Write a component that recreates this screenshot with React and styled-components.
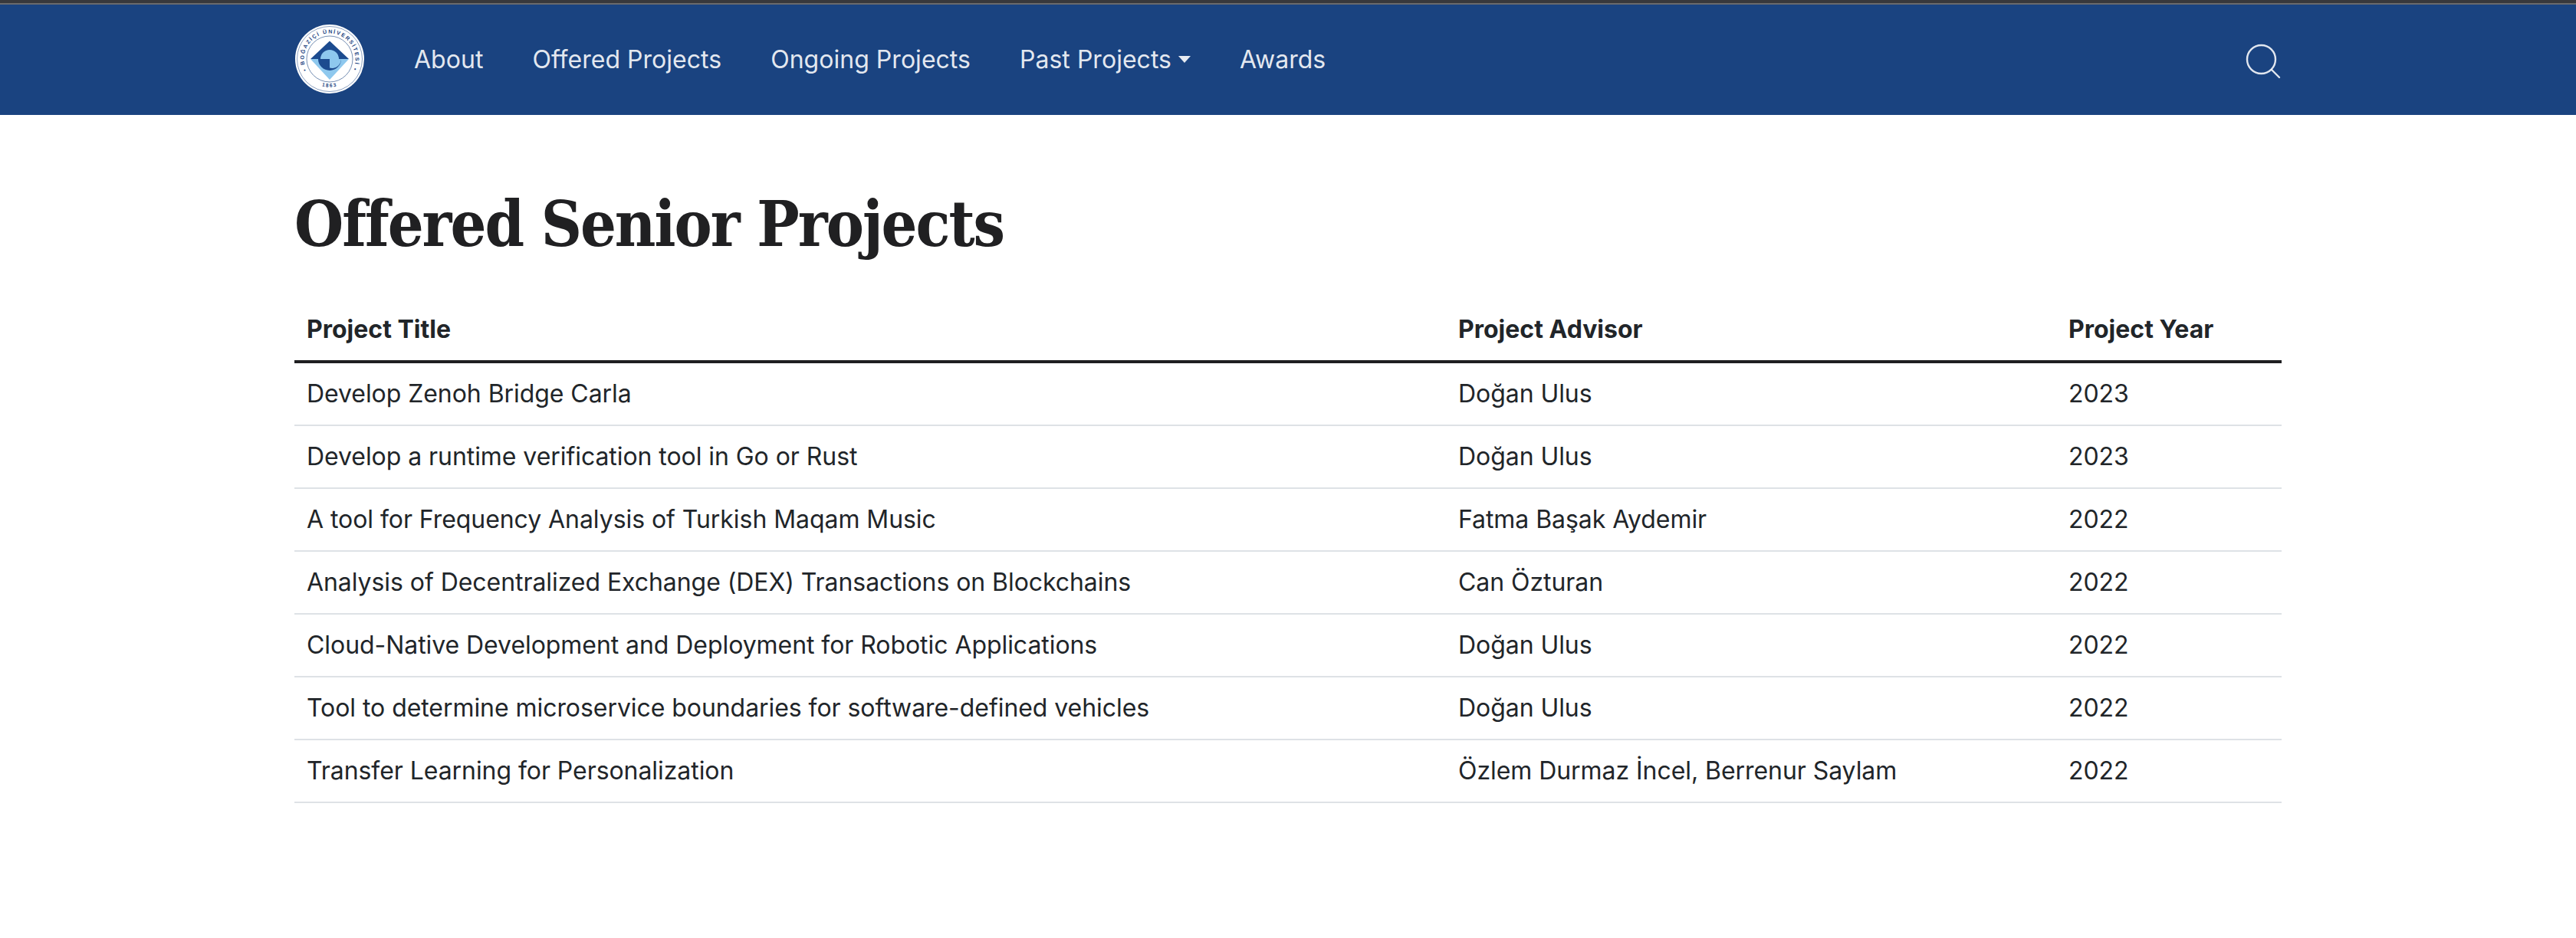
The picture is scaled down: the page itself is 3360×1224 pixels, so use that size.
import styled, { createGlobalStyle } from 'styled-components'

const GlobalStyle = createGlobalStyle`
  html, body {
    margin: 0;
    padding: 0;
    background: #fff;
    color: #212529;
    font-family: Inter, "Liberation Sans", sans-serif;
    font-size: 32px;
    line-height: 48px;
  }
`

const WindowEdge = styled.div`
  height: 4px;
  background: #38383b;
  border-bottom: 2px solid #6a6a6c;
`

const Navbar = styled.nav`
  height: 144px;
  background: #1a4380;
`

const NavInner = styled.div`
  width: 2592px;
  height: 100%;
  margin: 0 auto;
  display: flex;
  align-items: center;
`

const LogoSvg = styled.svg`
  width: 92px;
  height: 92px;
  margin-right: 32px;
  margin-bottom: 2px;
  flex: none;
`

const NavLink = styled.a`
  padding: 0 32px;
  color: rgba(255, 255, 255, 0.9);
  text-decoration: none;
  white-space: nowrap;
  letter-spacing: 0.03px;
  display: flex;
  align-items: center;
`

const Caret = styled.span`
  display: inline-block;
  margin-left: 9px;
  margin-top: -2px;
  border-top: 9px solid currentColor;
  border-left: 8.5px solid transparent;
  border-right: 8.5px solid transparent;
`

const SearchButton = styled.button`
  margin-left: auto;
  margin-top: 4px;
  padding: 0;
  border: 0;
  background: none;
  color: rgba(255, 255, 255, 0.87);
  display: flex;
`

const Main = styled.main`
  width: 2592px;
  margin: 0 auto;
`

const Heading = styled.h1`
  margin: 0;
  padding-top: 94px;
  padding-bottom: 50px;
  font-family: "DejaVu Serif", serif;
  font-stretch: condensed;
  font-variant-ligatures: none;
  font-weight: 700;
  font-size: 82px;
  line-height: 96px;
  letter-spacing: -2px;
  color: #202022;
`

const Table = styled.table`
  width: 100%;
  border-collapse: collapse;
  table-layout: fixed;
`

const HeadCell = styled.th`
  padding: 16px;
  text-align: left;
  font-weight: 700;
  border-bottom: 4px solid #1f1f21;
`

const Cell = styled.td`
  padding: 16px;
  letter-spacing: -0.06px;
  border-bottom: 2px solid #dee2e6;
`

const projects = [
  ['Develop Zenoh Bridge Carla', 'Doğan Ulus', '2023'],
  ['Develop a runtime verification tool in Go or Rust', 'Doğan Ulus', '2023'],
  ['A tool for Frequency Analysis of Turkish Maqam Music', 'Fatma Başak Aydemir', '2022'],
  ['Analysis of Decentralized Exchange (DEX) Transactions on Blockchains', 'Can Özturan', '2022'],
  ['Cloud-Native Development and Deployment for Robotic Applications', 'Doğan Ulus', '2022'],
  ['Tool to determine microservice boundaries for software-defined vehicles', 'Doğan Ulus', '2022'],
  ['Transfer Learning for Personalization', 'Özlem Durmaz İncel, Berrenur Saylam', '2022'],
]

function Logo() {
  return (
    <LogoSvg viewBox="0 0 92 92">
      <defs>
        <path id="sealTop" d="M15.9 60.7 A33.5 33.5 0 1 1 76.1 60.7" />
        <path id="sealBottom" d="M26 76.8 A36.5 36.5 0 0 0 66 76.8" />
      </defs>
      <circle cx="46" cy="46" r="45" fill="#fff" />
      <circle cx="46" cy="46" r="42.5" fill="none" stroke="#1a4380" strokeWidth="0.5" />
      <circle cx="46" cy="46" r="30" fill="none" stroke="#1a4380" strokeWidth="0.6" />
      <text fontFamily="Liberation Sans, sans-serif" fontSize="7" fontWeight="700" fill="#1a4380">
        <textPath href="#sealTop" textLength="134" lengthAdjust="spacing">• BOĞAZİÇİ ÜNİVERSİTESİ •</textPath>
      </text>
      <text fontFamily="Liberation Sans, sans-serif" fontSize="6.5" fontWeight="700" fill="#1a4380" letterSpacing="1.6" textAnchor="middle">
        <textPath href="#sealBottom" startOffset="50%">1863</textPath>
      </text>
      {/* diamond, dark above and light below, with the S in the middle */}
      <path d="M46 22.5 L71 46 H21 Z" fill="#1c4b8f" />
      <path d="M21 46 H71 L46 73 Z" fill="#8ec8ee" />
      <path d="M34 46 A12 12 0 0 1 58 46 Z" fill="#8ec8ee" />
      <path d="M31 46 H61 A15 15 0 0 1 31 46 Z" fill="#1c4b8f" />
      <path d="M46 46 H61 A12 12 0 0 1 46 57.5 Z" fill="#8ec8ee" />
    </LogoSvg>
  )
}

function SearchIcon() {
  return (
    <svg width="48" height="48" viewBox="0 0 48 48" fill="none" stroke="currentColor" strokeWidth="2.4">
      <circle cx="21.5" cy="21.5" r="18.5" />
      <path d="M35 35 L45 45" strokeLinecap="round" />
    </svg>
  )
}

export default function App() {
  return (
    <>
      <GlobalStyle />
      <WindowEdge />
      <Navbar>
        <NavInner>
          <Logo />
          <NavLink href="#">About</NavLink>
          <NavLink href="#">Offered Projects</NavLink>
          <NavLink href="#">Ongoing Projects</NavLink>
          <NavLink href="#">Past Projects<Caret /></NavLink>
          <NavLink href="#">Awards</NavLink>
          <SearchButton aria-label="Search"><SearchIcon /></SearchButton>
        </NavInner>
      </Navbar>
      <Main>
        <Heading>Offered Senior Projects</Heading>
        <Table>
          <colgroup>
            <col style={{ width: 1502 }} />
            <col style={{ width: 796 }} />
            <col style={{ width: 294 }} />
          </colgroup>
          <thead>
            <tr>
              <HeadCell>Project Title</HeadCell>
              <HeadCell>Project Advisor</HeadCell>
              <HeadCell>Project Year</HeadCell>
            </tr>
          </thead>
          <tbody>
            {projects.map(([title, advisor, year]) => (
              <tr key={title}>
                <Cell>{title}</Cell>
                <Cell>{advisor}</Cell>
                <Cell>{year}</Cell>
              </tr>
            ))}
          </tbody>
        </Table>
      </Main>
    </>
  )
}
